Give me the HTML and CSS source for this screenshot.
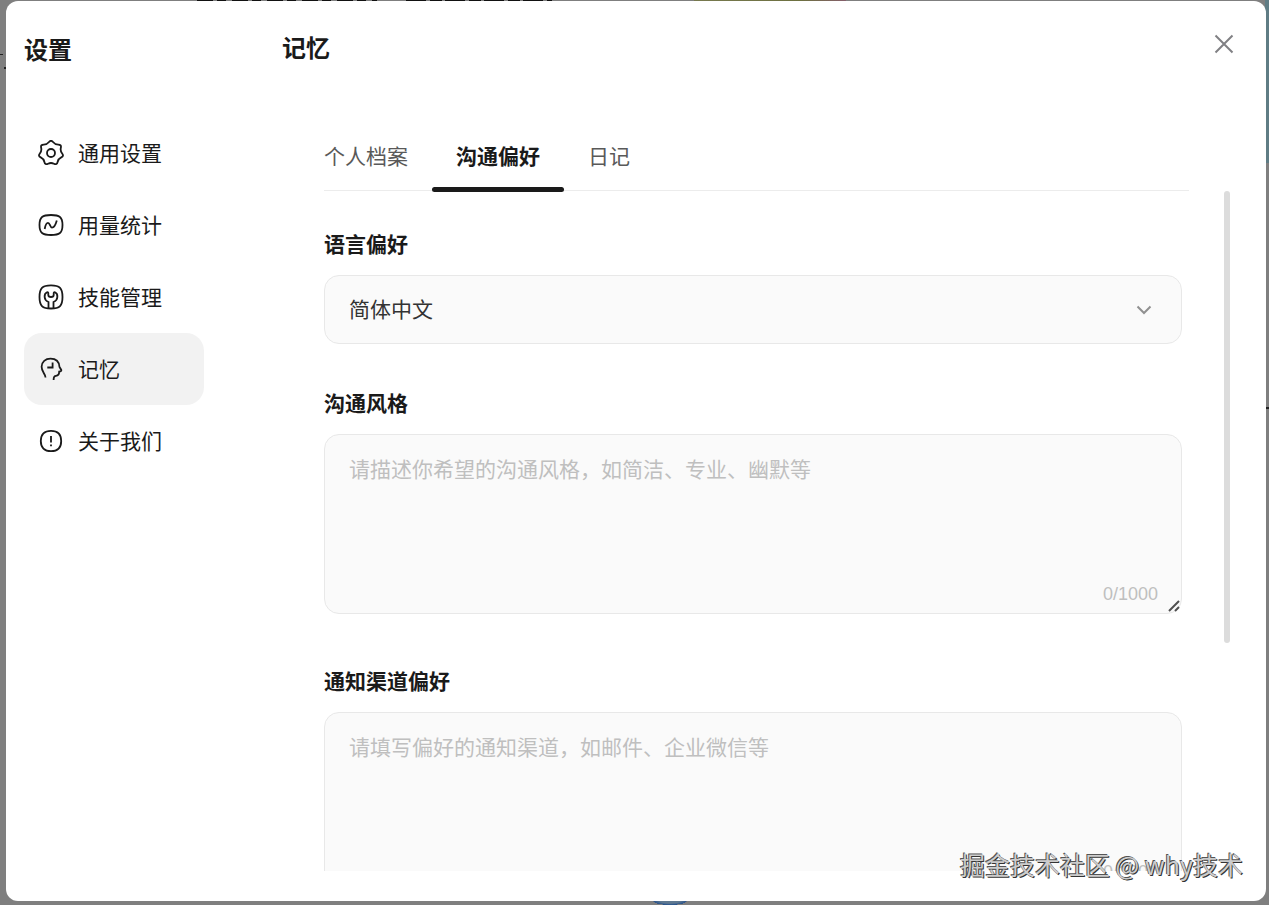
FILE: index.html
```html
<!DOCTYPE html>
<html lang="zh-CN">
<head>
<meta charset="utf-8">
<meta name="viewport" content="width=device-width, initial-scale=1">
<title>设置</title>
<link rel="stylesheet" href="styles.css">
</head>
<body class="page">
<div class="modal" role="dialog" aria-labelledby="settings-title">
  <aside class="sidebar">
    <h1 class="title" id="settings-title">设置</h1>
    <nav class="nav">
      <button class="nav-item" type="button">
        <svg class="icon" viewBox="0 0 26 26"><path d="M11 2.05Q13-.5 15 2.05Q17 4.6 20.3 4.6Q23.6 4.6 22.85 7.75Q22.1 10.9 24.15 13.45Q26.2 16 23.25 17.4Q20.3 18.8 19.6 22Q18.9 25.2 15.95 23.75Q13 22.3 10.05 23.75Q7.1 25.2 6.4 22Q5.7 18.8 2.75 17.4Q-.2 16 1.85 13.45Q3.9 10.9 3.15 7.75Q2.4 4.6 5.7 4.6Q9 4.6 11 2.05Z"/><circle cx="13" cy="13" r="4"/></svg>
        <span class="nav-text">通用设置</span>
      </button>
      <button class="nav-item" type="button">
        <svg class="icon" viewBox="0 0 26 26"><path d="M13 3C21.500 3 24.500 5 24.500 13S21.500 23 13 23S1.500 21 1.500 13S4.500 3 13 3Z"/><path d="M6.700 17C7.300 13.500 8.300 10.800 10 10.800C12 10.800 12 15.600 14 15.600C16 15.600 17.700 12.500 18.800 8.500"/></svg>
        <span class="nav-text">用量统计</span>
      </button>
      <button class="nav-item" type="button">
        <svg class="icon" viewBox="0 0 26 26"><path d="M13 1.300C21.800 1.300 24.500 4.200 24.500 13S21.800 24.500 13 24.500S1.500 21.800 1.500 13S4.200 1.300 13 1.300Z"/><path d="M10.500 24V18C5.500 16 5.700 9.800 9 8.300C10 7.900 10.300 8.500 10.300 9.300V11C10.300 12.200 11.800 13 13 13S15.700 12.200 15.700 11V9.300C15.700 8.500 16 7.900 17 8.300C20.300 9.800 20.500 16 15.500 18V24"/></svg>
        <span class="nav-text">技能管理</span>
      </button>
      <button class="nav-item nav-item-active" type="button" aria-current="page">
        <svg class="icon" viewBox="0 0 26 26"><path d="M7.500 21.500C7.500 17.500 3.600 16 3.600 10.800C3.600 5.800 7.500 2.600 12.500 2.600C18 2.600 21.200 6 21.500 11L23.300 14C23.600 14.800 22.800 15.300 21.200 15.600C21.200 18.500 20.300 19.800 18 19.800C16.300 19.800 15.600 20.500 15.600 24"/><path d="M14.600 6.500V11.500H9.300"/></svg>
        <span class="nav-text">记忆</span>
      </button>
      <button class="nav-item" type="button">
        <svg class="icon" viewBox="0 0 26 26"><path d="M13 2.800C19.600 2.800 23.200 6.400 23.200 13S19.600 23.200 13 23.200S2.800 19.600 2.800 13S6.400 2.800 13 2.800Z"/><path d="M13 8V14.500M13 16.500V18.200"/></svg>
        <span class="nav-text">关于我们</span>
      </button>
    </nav>
  </aside>

  <main class="main">
    <header class="header">
      <h2 class="title">记忆</h2>
      <button class="close" type="button" aria-label="关闭">
        <svg class="close-icon" viewBox="0 0 20 20"><path d="M1.500 1.500L18.500 18.500M18.500 1.500L1.500 18.500"/></svg>
      </button>
    </header>

    <div class="tabs" role="tablist">
      <button class="tab" type="button" role="tab" aria-selected="false">个人档案</button>
      <button class="tab tab-active" type="button" role="tab" aria-selected="true">沟通偏好</button>
      <button class="tab" type="button" role="tab" aria-selected="false">日记</button>
    </div>

    <div class="viewport">
      <form class="form">
        <div class="field">
          <label class="label" for="language">语言偏好</label>
          <div class="control">
            <select class="input select" id="language">
              <option selected>简体中文</option>
            </select>
            <svg class="chevron" viewBox="0 0 16 10"><path d="M1.500 1.500L8 8L14.500 1.500"/></svg>
          </div>
        </div>
        <div class="field field-long">
          <label class="label" for="style">沟通风格</label>
          <div class="control">
            <textarea class="input textarea" id="style" maxlength="1000" placeholder="请描述你希望的沟通风格，如简洁、专业、幽默等"></textarea>
            <span class="counter">0/1000</span>
            <svg class="grip" viewBox="0 0 12 12"><path d="M1 11L11 1M7 11L11 7"/></svg>
          </div>
        </div>
        <div class="field field-long">
          <label class="label" for="channel">通知渠道偏好</label>
          <div class="control">
            <textarea class="input textarea" id="channel" maxlength="1000" placeholder="请填写偏好的通知渠道，如邮件、企业微信等"></textarea>
            <span class="counter">0/1000</span>
            <svg class="grip" viewBox="0 0 12 12"><path d="M1 11L11 1M7 11L11 7"/></svg>
          </div>
        </div>
      </form>
      <div class="scrollbar"><div class="thumb"></div></div>
    </div>
  </main>
</div>
<div class="watermark">掘金技术社区 @ why技术</div>
</body>
</html>
```

FILE: styles.css
```css
* {
  box-sizing: border-box;
}

.page {
  position: relative;
  display: flex;
  height: 100vh;
  margin: 0;
  padding: 1px 3px 4px 6px;
  overflow: hidden;
  background:
    linear-gradient(#5f7c84, #5f7c84) right 0 top 0 / 4px 163px no-repeat,
    repeating-linear-gradient(90deg, #111 0 16px, #808080 16px 20px, #111 20px 29px, #808080 29px 35px) 197px 0 / 180px 1px no-repeat,
    repeating-linear-gradient(90deg, #111 0 20px, #808080 20px 24px, #111 24px 36px, #808080 36px 39px) 406px 0 / 146px 1px no-repeat,
    linear-gradient(90deg, #77794f, #6d7040 70%, #855f6b) 694px 0 / 152px 1px no-repeat,
    radial-gradient(ellipse at 50% 0, #5f7890 40%, #29538c 68%, transparent 70%) 653px 100% / 34px 4px no-repeat,
    linear-gradient(#222, #222) 0 54px / 3px 1px no-repeat,
    linear-gradient(#222, #222) 4px 67px / 2px 2px no-repeat,
    linear-gradient(#222, #222) 100% 407px / 3px 2px no-repeat,
    #7f7f7f;
  color: #1a1a1a;
  font-family: "Noto Sans CJK SC", sans-serif;
  font-size: 21px;
  line-height: 30px;
}

.modal {
  display: flex;
  flex: 1;
  min-width: 0;
  border-radius: 12px;
  background: #fff;
}

button,
select,
textarea {
  margin: 0;
  border: 0;
  background: none;
  color: inherit;
  font: inherit;
}

.title {
  margin: 0;
  font-size: 24px;
  font-weight: 700;
  line-height: 36px;
}

.sidebar {
  flex: none;
  width: 276px;
  padding: 30px 78px 0 18px;
}

.nav {
  display: flex;
  flex-direction: column;
  margin-top: 50px;
}

.nav-item {
  display: flex;
  align-items: center;
  gap: 14px;
  height: 72px;
  padding: 0 14px;
  border-radius: 18px;
  text-align: left;
}

.nav-item-active {
  background: #f2f2f2;
}

.nav-text {
  padding-bottom: 3px;
}

.icon {
  flex: none;
  width: 26px;
  height: 26px;
  fill: none;
  stroke: #1a1a1a;
  stroke-width: 1.8;
}

.main {
  display: flex;
  flex: 1;
  flex-direction: column;
  min-width: 0;
  padding-bottom: 30px;
}

.header {
  display: flex;
  align-items: flex-start;
  justify-content: space-between;
  padding: 28px 32px 0 0;
}

.close {
  display: flex;
  margin-top: 5px;
  padding: 0;
}

.close-icon {
  width: 20px;
  height: 20px;
  fill: none;
  stroke: #808084;
  stroke-width: 2;
}

.tabs {
  display: flex;
  height: 68px;
  margin: 58px 77px 0 42px;
  border-bottom: 1px solid #ececec;
}

.tab {
  position: relative;
  height: 67px;
  padding: 0 24px 4px;
  color: #595959;
}

.tab:first-child {
  padding-left: 0;
}

.tab-active {
  color: #1a1a1a;
  font-weight: 700;
}

.tab-active::after {
  content: "";
  position: absolute;
  right: 0;
  bottom: -2px;
  left: 0;
  height: 5px;
  border-radius: 3px;
  background: #1a1a1a;
}

.viewport {
  display: flex;
  flex: 1;
  gap: 42px;
  min-height: 0;
  padding: 0 36px 0 42px;
}

.form {
  display: flex;
  flex: 1;
  flex-direction: column;
  gap: 44px;
  min-width: 0;
  padding-top: 38px;
  overflow: hidden;
}

.field {
  display: flex;
  flex: none;
  flex-direction: column;
  gap: 18px;
}

.field-long {
  padding-bottom: 8px;
}

.label {
  font-weight: 700;
  line-height: 28px;
}

.control {
  position: relative;
  display: flex;
}

.input {
  width: 100%;
  border: 1px solid #e8e8e8;
  border-radius: 15px;
  background: #fafafa;
}

.select {
  height: 69px;
  padding: 0 24px 3px;
  color: #333;
  appearance: none;
}

.chevron {
  position: absolute;
  top: 30px;
  right: 30px;
  width: 16px;
  height: 10px;
  fill: none;
  stroke: #909090;
  stroke-width: 2;
}

.textarea {
  height: 180px;
  padding: 18px 24px;
  resize: none;
}

.textarea::placeholder {
  color: #bfbfbf;
}

.counter {
  position: absolute;
  right: 24px;
  bottom: 8px;
  color: #bfbfbf;
  font-family: "Liberation Sans", sans-serif;
  font-size: 18px;
  line-height: 24px;
}

.grip {
  position: absolute;
  right: 2px;
  bottom: 2px;
  width: 12px;
  height: 12px;
  fill: none;
  stroke: #505050;
  stroke-width: 2;
}

.scrollbar {
  flex: none;
  width: 6px;
}

.thumb {
  height: 66.5%;
  border-radius: 3px;
  background: #dcdcdc;
}

.watermark {
  position: absolute;
  right: 26px;
  bottom: 23px;
  color: #ccc;
  font-size: 25px;
  line-height: 36px;
  text-shadow: -1px -1px 0 #555, 1px 1px 0 #333;
  white-space: pre;
}
```
